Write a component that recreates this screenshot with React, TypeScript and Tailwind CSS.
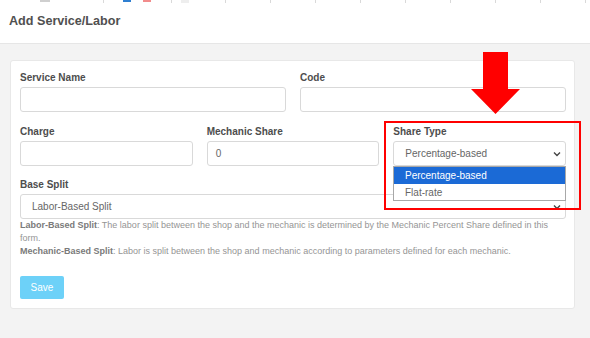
import React from "react";

const Chevron = () => (
  <svg width="8" height="6" viewBox="0 0 8 6" className="shrink-0">
    <path d="M1 1.5 L4 4.5 L7 1.5" fill="none" stroke="#444" strokeWidth="1.4" />
  </svg>
);

const Label = ({ children }: { children: React.ReactNode }) => (
  <div className="text-[10px] leading-[14px] font-bold text-[#4d4d4d] mb-[2px]">{children}</div>
);

const Input = ({ value }: { value?: string }) => (
  <div className="h-[25px] border border-[#d9d9d9] rounded-[3px] bg-white flex items-center px-[8px] text-[10px] text-[#666]">
    {value}
  </div>
);

const Select = ({ value }: { value: string }) => (
  <div className="h-[25px] border border-[#d9d9d9] rounded-[3px] bg-white flex items-center justify-between pl-[11px] pr-[4px] text-[10px] text-[#666]">
    <span>{value}</span>
    <Chevron />
  </div>
);

export default function App() {
  const ticks = [103, 171, 225, 270, 315, 360, 405, 450, 495, 540, 585];
  return (
    <div
      className="relative w-[590px] h-[338px] overflow-hidden bg-[#f3f3f3]"
      style={{ fontFamily: '"Liberation Sans", Arial, sans-serif' }}
    >
      {/* header */}
      <div className="relative h-[44px] bg-white border-b border-[#e6e6e6] flex items-center pl-[9px]">
        {ticks.map((x) => (
          <div key={x} className="absolute top-0 w-px h-[3px] bg-[#d9d9d9]" style={{ left: x }} />
        ))}
        <div className="absolute top-0 left-[40px] w-[10px] h-[2px] bg-[#cfcfcf]" />
        <div className="absolute top-0 left-[123px] w-[8px] h-[2px] bg-[#2f7fd1]" />
        <div className="absolute top-0 left-[143px] w-[8px] h-[2px] bg-[#f28c8c]" />
        <div className="absolute top-0 left-[181px] w-[8px] h-[3px] bg-[#eeeeee]" />
        <h1 className="text-[12.6px] font-bold text-[#505050]">Add Service/Labor</h1>
      </div>

      {/* card */}
      <div className="mt-[16px] ml-[10px] w-[565px] bg-white border border-[#e8e8e8] rounded-[3px] pt-[10px] pb-[9px] pl-[9px] pr-[8px]">
        <div className="grid grid-cols-2 gap-x-[14px]">
          <div>
            <Label>Service Name</Label>
            <Input />
          </div>
          <div>
            <Label>Code</Label>
            <Input />
          </div>
        </div>

        <div className="grid grid-cols-3 gap-x-[14px] mt-[13px]">
          <div>
            <Label>Charge</Label>
            <Input />
          </div>
          <div>
            <Label>Mechanic Share</Label>
            <Input value="0" />
          </div>
          <div>
            <Label>Share Type</Label>
            <Select value="Percentage-based" />
          </div>
        </div>

        <div className="mt-[12px]">
          <Label>Base Split</Label>
          <Select value="Labor-Based Split" />
        </div>

        <div className="text-[9px] leading-[13px] text-[#959595]">
          <div>
            <b className="text-[#7a7a7a]">Labor-Based Split</b>: The labor split between the shop and the mechanic is determined by the Mechanic Percent Share defined in this form.
          </div>
          <div>
            <b className="text-[#7a7a7a]">Mechanic-Based Split</b>: Labor is split between the shop and mechanic according to parameters defined for each mechanic.
          </div>
        </div>

        <button className="mt-[18px] w-[44px] h-[23px] rounded-[2px] bg-[#6dd1f8] text-white text-[10px]">
          Save
        </button>
      </div>

      {/* dropdown list */}
      <div className="absolute left-[393px] top-[166px] w-[173px] border border-[#a8a8a8] bg-white text-[10px]">
        <div className="h-[17px] bg-[#1b6ad6] text-white flex items-center pl-[11px]">Percentage-based</div>
        <div className="h-[16px] text-[#666] flex items-center pl-[11px]">Flat-rate</div>
      </div>

      {/* red highlight box */}
      <div className="absolute left-[384px] top-[121px] w-[197px] h-[89px] border-2 border-[#ff0000]" />

      {/* arrow */}
      <svg className="absolute left-[470px] top-[52px]" width="52" height="63" viewBox="0 0 52 63">
        <path d="M13 0 H38 V37 H50 L25.5 62 L1 37 H13 Z" fill="#ff0000" />
      </svg>
    </div>
  );
}
